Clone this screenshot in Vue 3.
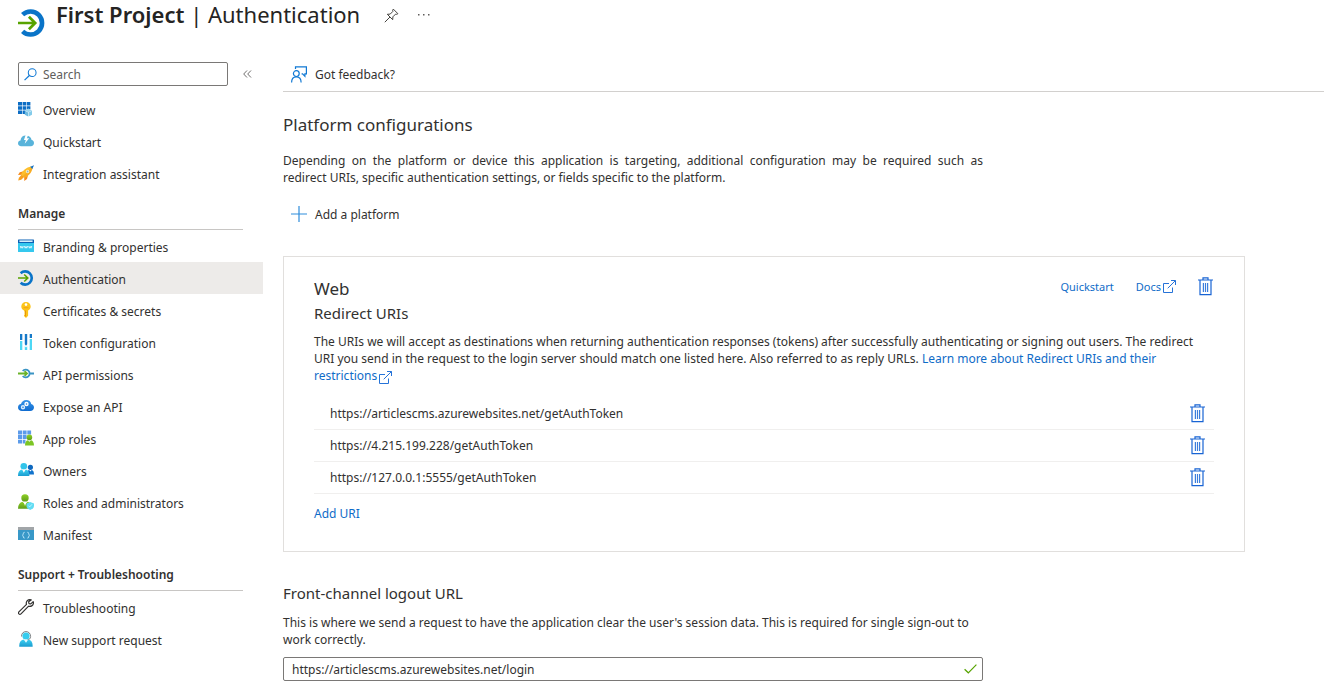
<script setup>
import { ref } from 'vue'

const search = ref('')
const logoutUrl = ref('https://articlescms.azurewebsites.net/login')

const sections = [
  {
    title: '',
    items: [
      { label: 'Overview', icon: 'overview' },
      { label: 'Quickstart', icon: 'quickstart' },
      { label: 'Integration assistant', icon: 'rocket' }
    ]
  },
  {
    title: 'Manage',
    items: [
      { label: 'Branding & properties', icon: 'branding' },
      { label: 'Authentication', icon: 'auth', active: true },
      { label: 'Certificates & secrets', icon: 'key' },
      { label: 'Token configuration', icon: 'token' },
      { label: 'API permissions', icon: 'permissions' },
      { label: 'Expose an API', icon: 'expose' },
      { label: 'App roles', icon: 'approles' },
      { label: 'Owners', icon: 'owners' },
      { label: 'Roles and administrators', icon: 'admins' },
      { label: 'Manifest', icon: 'manifest' }
    ]
  },
  {
    title: 'Support + Troubleshooting',
    items: [
      { label: 'Troubleshooting', icon: 'wrench' },
      { label: 'New support request', icon: 'support' }
    ]
  }
]

const redirectUris = [
  'https://articlescms.azurewebsites.net/getAuthToken',
  'https://4.215.199.228/getAuthToken',
  'https://127.0.0.1:5555/getAuthToken'
]
</script>

<template>
  <div class="page">
    <svg class="sprite" width="0" height="0" aria-hidden="true">
      <defs>
        <linearGradient id="g-cyan" x1="0" y1="0" x2="0" y2="1">
          <stop offset="0" stop-color="#3cd0f2" /><stop offset="1" stop-color="#1b9ccf" />
        </linearGradient>
        <linearGradient id="g-blue" x1="0" y1="0" x2="0" y2="1">
          <stop offset="0" stop-color="#3a96e8" /><stop offset="1" stop-color="#0f6cd0" />
        </linearGradient>
        <linearGradient id="g-green" x1="0" y1="0" x2="0" y2="1">
          <stop offset="0" stop-color="#8fd127" /><stop offset="1" stop-color="#5f9d18" />
        </linearGradient>
      </defs>
      <symbol id="i-overview" viewBox="0 0 16 16">
        <path fill="#0c6dc4" d="M0 1h4v3.600H0zM4.600 1h3.600v3.600H4.600zM8.800 1h3.600v3.600H8.800zM0 5.200h4v3.600H0zM4.600 5.200h3.600v3.600H4.600zM8.800 5.200h3.600v3H8.800zM0 9.400h4V13H0zM4.600 9.400h2.800V13H4.600z" />
        <path fill="#9bd4ee" d="M10.400 7.600 14 9.400 10.400 11.200 6.800 9.400z" />
        <path fill="#6cb9df" d="M6.800 9.800l3.400 1.700v4L6.800 13.700z" />
        <path fill="#83cbea" d="M14 9.800l-3.400 1.700v4l3.400-1.800z" />
      </symbol>
      <symbol id="i-quickstart" viewBox="0 0 16 16">
        <path fill="#58b3da" d="M3.200 13.200C1.200 13.200 0 12 0 10.300S1.100 7.700 2.500 7.500C2.700 4.600 4.800 2.600 7.800 2.600c3 0 5.400 1.600 5.800 4.500C15 7.300 16 8.400 16 10c0 1.900-1.300 3.200-3.200 3.200z" />
        <path fill="#fff" d="M7.800 1.800h2.400L8.900 5.300h2.300L6.700 10.800l1.100-3.900H5.900z" />
      </symbol>
      <symbol id="i-rocket" viewBox="0 0 16 16">
        <path fill="#f58b1f" d="M6 6.200 1.700 7.200 0 10l3.600-.2zM10 10.300 9 14l-2.700 2-.1-3.700z" />
        <path fill="#f7a021" d="M3.800 9.600.9 12.800.2 15.600l3-.9 3.200-2.900z" />
        <path fill="#fdbf2d" d="M3.100 9.300C4.700 5.500 8.300 2.600 13 1.600l1.500 1.500C13.600 7.600 10.500 11.200 6.600 12.800z" />
        <path fill="#f39a1c" d="M4.900 11.100 13.800 2.400l.7.700c-.9 4.500-4 8.100-7.900 9.700z" opacity=".5" />
        <circle cx="9.600" cy="6.500" r="1.700" fill="#fff2cd" /><circle cx="9.600" cy="6.500" r=".9" fill="#8fb6c8" />
        <path fill="#1470c4" d="M12.200 1.700 16 .2l-1.700 3.900z" />
      </symbol>
      <symbol id="i-branding" viewBox="0 0 16 16">
        <path fill="#0d62b5" d="M.6 1.500h14.800q.6 0 .6.600V5H0V2.100q0-.6.600-.6z" />
        <path fill="#d7eefb" d="M1.400 2.400h13.200V4H1.400z" />
        <path fill="#35c8ee" d="M0 5h16v8.400q0 .6-.6.600H.6Q0 14 0 13.400z" />
        <path fill="none" stroke="#e3f9ff" stroke-width=".9" d="M2.300 8l.7 2.200.8-1.800.8 1.800.7-2.200M6.400 8l.8 2.200.8-1.800.8 1.800.8-2.200M10.700 8l.7 2.200.8-1.800.8 1.800.7-2.200" />
      </symbol>
      <symbol id="i-auth" viewBox="0 0 28 28">
        <path fill="none" stroke="#0a74c8" stroke-width="4.600" d="M4.600 5.700A11.500 11.500 0 1 1 4.600 22.300" />
        <path fill="none" stroke="#57a300" stroke-width="2.700" d="M0 14h17M10.900 7.800 17.200 14l-6.300 6.200" />
      </symbol>
      <symbol id="i-key" viewBox="0 0 16 16">
        <path fill="#fcc419" d="M8 0c2.700 0 4.700 1.900 4.700 4.500 0 1.900-1 3.300-2.600 4v5.200L8 16l-2-2v-1l1-.9-1-1 1-1-1-.9v-.7c-1.600-.7-2.700-2.100-2.700-4C3.300 1.900 5.300 0 8 0z" />
        <path fill="#e7960d" d="M7 8.600h1v6H7z" /><circle cx="8" cy="2.600" r="1.300" fill="#fff" />
        <path fill="#f39d12" d="M5.500 5.300h5v.9h-5z" />
      </symbol>
      <symbol id="i-token" viewBox="0 0 16 16">
        <path fill="#1679c8" d="M2 0h2.300v6H2zM11.700 0H14v4h-2.300zM6.800 0h2.400v10.300L8 11.700l-1.200-1.400z" />
        <path fill="#4dd8f5" d="M2 7h2.300v9H2zM11.700 5H14v11h-2.300zM6.800 12.300 8 13.500l1.200-1.200V16H6.800z" />
      </symbol>
      <symbol id="i-permissions" viewBox="0 0 16 16">
        <path fill="none" stroke="#3a94c4" stroke-width="1.800" d="M4.700 5A3.900 3.900 0 1 1 4.700 10M11.800 7.500H16" />
        <path fill="none" stroke="#6bb32b" stroke-width="1.800" d="M0 7.500h8.800M6.600 5.100 9 7.500 6.600 9.900" />
      </symbol>
      <symbol id="i-expose" viewBox="0 0 16 16">
        <path fill="url(#g-blue)" d="M4 13c-2.300 0-4-1.500-4-3.500s1.300-3.200 3-3.400C3.500 3.500 5.600 1.900 8.200 1.900c2.700 0 4.600 1.600 5 4C14.900 6.200 16 7.500 16 9.300c0 2.200-1.500 3.700-3.800 3.700z" />
        <circle cx="8.500" cy="6" r="1.500" fill="none" stroke="#fff" stroke-width="1.400" />
        <circle cx="5" cy="9.300" r="1.500" fill="none" stroke="#d8ecfc" stroke-width="1.400" />
      </symbol>
      <symbol id="i-approles" viewBox="0 0 16 16">
        <path fill="#5c9bea" d="M0 .5h4v3.900H0zM4.700.5h3.900v3.900H4.700zM9.300.5h3.800v3.900H9.300zM0 5.100h4V9H0zM4.700 5.100h3.900V9H4.700zM0 9.700h4v3.900H0zM4.700 9.700h2.800v3.900H4.700z" />
        <circle cx="11.400" cy="7.400" r="2.800" fill="url(#g-green)" />
        <path fill="#7cc524" d="M7 15.500c0-3 1-5 2.700-5.300l1.700 1.500 1.700-1.500c1.800.3 2.900 2.300 2.900 5.300z" />
      </symbol>
      <symbol id="i-owners" viewBox="0 0 16 16">
        <circle cx="12.400" cy="5.300" r="2.600" fill="#0e68bf" /><path fill="#1173cc" d="M8.800 12.600c0-3 1.200-4.300 2.400-4.500l1.200 1.300 1.200-1.300c1.600.2 2.400 1.700 2.400 4.500z" />
        <circle cx="5.800" cy="4.300" r="3.300" fill="#32c4ea" />
        <path fill="url(#g-cyan)" d="M0 14c0-4 1.400-6 3.700-6.500l2.100 2.300 2.200-2.300c2.200.5 3.400 2.500 3.400 6.500z" /><path fill="#fff" d="M4.700 7.700h2.400L5.900 11z" />
      </symbol>
      <symbol id="i-admins" viewBox="0 0 16 16">
        <circle cx="7" cy="3.900" r="3.700" fill="url(#g-green)" />
        <path fill="url(#g-green)" d="M0 14.800C0 10.600 1.800 8.300 4.500 7.700L7 10.300l2.600-2.600c2.200.5 3.400 2 3.400 7.100z" />
        <path fill="#fff" d="M5.700 8h2.700L7 12z" />
        <path fill="#62dcf3" d="m12.200 8 3.800 1.400v2.500c0 1.800-1.500 3.200-3.800 4.100-2.300-.9-3.700-2.300-3.700-4.100V9.400z" />
        <path fill="none" stroke="#d5faff" stroke-width=".8" d="m10.400 11.600 1.300 1.300 2.300-2.600" />
      </symbol>
      <symbol id="i-manifest" viewBox="0 0 16 16">
        <path fill="#3898c8" d="M0 1h16v13H0z" /><path fill="#a1a5a8" d="M0 1h16v3H0z" />
        <path fill="none" stroke="#cdefff" stroke-width=".9" d="M6.600 6.300q-1.300 0-1.300 1.300 0 1.300-.8 1.600.8.300.8 1.600 0 1.300 1.300 1.300M9.400 6.300q1.300 0 1.300 1.300 0 1.300.8 1.600-.8.300-.8 1.600 0 1.300-1.300 1.300" />
      </symbol>
      <symbol id="i-wrench" viewBox="0 0 16 16">
        <path fill="none" stroke="#323130" stroke-width="1.200" stroke-linejoin="round" d="M13.200.9C11.300.2 9.200 1 8.500 2.900c-.3.900-.3 1.700 0 2.500L.9 12.900c-.6.700-.5 1.500 0 2 .6.500 1.500.5 2.100-.1l7.600-7.600c2.200.8 4.500-.7 4.800-2.900.1-.6 0-1.200-.2-1.700l-2.400 2.300-1.800-.3-.4-1.900z" />
      </symbol>
      <symbol id="i-support" viewBox="0 0 16 16">
        <path fill="none" stroke="#7b7f83" stroke-width="1" d="M3.500 5.500C3.500 2.300 5.400.6 8 .6s4.600 1.800 4.600 4.900c0 2-1.200 3.200-3.100 3.200" />
        <circle cx="8" cy="5" r="3.600" fill="#36ccee" />
        <path fill="url(#g-cyan)" d="M1.200 15.200c0-4.100 1.600-6.300 4.300-6.800L8 11l2.500-2.600c2.700.5 4.200 2.700 4.200 6.800q0 .6-.6.600H1.800q-.6 0-.6-.6z" />
        <path fill="#e6fbff" d="M6.700 8.800h2.600L8 12z" />
      </symbol>
      <symbol id="i-trash" viewBox="0 0 15 19">
        <path fill="none" stroke="#1864d4" stroke-width="1.200" d="M0 3h15M5 3V.8h5V3M2 3.500v14.200h11V3.500" />
        <path fill="none" stroke="#3c7edc" stroke-width="1.200" d="M5.400 6v9M7.500 6v9M9.600 6v9" />
      </symbol>
      <symbol id="i-external" viewBox="0 0 13 13">
        <path fill="none" stroke="#2673d8" stroke-width="1" d="M6 3.500H.5v9h9V7.500M8 .5h4.500V5M12.400.6 4.700 8.300" />
      </symbol>
    </svg>

    <header class="head">
      <svg class="head-icon"><use href="#i-auth" /></svg>
      <h1><b>First Project</b> | Authentication</h1>
      <button class="plain pin" aria-label="Pin">
        <svg width="15" height="15" viewBox="0 0 15 15"><path fill="none" stroke="#45433f" d="M9.300 1.100 13.900 5.700 12.800 6.300 11.600 6.100 8.900 8.800 8.700 11.700 3.300 6.300 6.200 6.100 8.900 3.400 8.700 2.200zM6 9 .8 14.200" /></svg>
      </button>
      <button class="plain more" aria-label="More options">
        <svg width="12" height="4" viewBox="0 0 12 4"><path fill="#605e5c" d="M0 1h1.500v1.500H0zM5 1h1.500v1.500H5zM10 1h1.500v1.500H10z" /></svg>
      </button>
    </header>

    <div class="body">
      <aside class="side">
        <div class="search-row">
          <label class="search">
            <svg width="13" height="13" viewBox="0 0 14 14"><circle cx="8.800" cy="5" r="4.200" fill="none" stroke="#0f78d4" stroke-width="1.100" /><path stroke="#0f78d4" stroke-width="1.300" d="M5.800 8.100.6 13.100" /></svg>
            <input v-model="search" type="text" placeholder="Search" aria-label="Search">
          </label>
          <button class="plain" aria-label="Collapse menu">
            <svg width="9" height="8" viewBox="0 0 9 8"><path fill="none" stroke="#605e5c" stroke-width=".9" d="M4 .5.700 4 4 7.500M8 .5 4.700 4 8 7.500" /></svg>
          </button>
        </div>
        <nav>
          <template v-for="section in sections" :key="section.title">
            <h2 v-if="section.title" class="group">{{ section.title }}</h2>
            <a v-for="item in section.items" :key="item.label" href="#" class="item" :class="{ active: item.active }">
              <svg class="item-icon"><use :href="'#i-' + item.icon" /></svg>
              <span>{{ item.label }}</span>
            </a>
          </template>
        </nav>
      </aside>

      <main class="main">
        <div class="toolbar">
          <button class="command">
            <svg width="16" height="17" viewBox="0 0 16 17"><path fill="none" stroke="#0f78d4" stroke-width="1.200" d="M4.500 3V.9h10.900v7h-1.500v2.400l-2.300-2.400h-1" /><circle cx="5.300" cy="7.600" r="2.900" fill="none" stroke="#0f78d4" stroke-width="1.200" /><path fill="none" stroke="#0f78d4" stroke-width="1.200" d="M.6 16.400c0-3.400 1.800-5.500 4.700-5.500s4.800 2.100 4.800 5.500" /></svg>
            <span>Got feedback?</span>
          </button>
        </div>

        <section class="platforms">
          <h2>Platform configurations</h2>
          <p class="justified">Depending on the platform or device this application is targeting, additional configuration may be required such as redirect&nbsp;URIs, specific authentication settings, or fields specific to the platform.</p>
          <button class="command">
            <svg width="16" height="16" viewBox="0 0 16 16"><path fill="none" stroke="#2f8ddb" stroke-width="1.200" d="M8 0v16M0 8h16" /></svg>
            <span>Add a platform</span>
          </button>
        </section>

        <section class="card">
          <div class="card-head">
            <h2>Web</h2>
            <div class="card-links">
              <a href="#">Quickstart</a>
              <a href="#" class="docs">Docs<svg class="ext"><use href="#i-external" /></svg></a>
              <button class="plain trash" aria-label="Delete platform"><svg><use href="#i-trash" /></svg></button>
            </div>
          </div>
          <h3>Redirect URIs</h3>
          <p>The URIs we will accept as destinations when returning authentication responses (tokens) after successfully authenticating or signing out users. The redirect URI you send in the request to the login server should match one listed here. Also referred to as reply URLs. <a href="#">Learn more about Redirect URIs and their restrictions<svg class="ext"><use href="#i-external" /></svg></a></p>
          <ul class="uris">
            <li v-for="uri in redirectUris" :key="uri">
              <span>{{ uri }}</span>
              <button class="plain trash" :aria-label="'Delete ' + uri"><svg><use href="#i-trash" /></svg></button>
            </li>
          </ul>
          <a href="#">Add URI</a>
        </section>

        <section class="logout">
          <h2><label for="logout-url">Front-channel logout URL</label></h2>
          <p>This is where we send a request to have the application clear the user's session data. This is required for single sign-out to work correctly.</p>
          <div class="field">
            <input id="logout-url" v-model="logoutUrl" type="text">
            <svg width="13" height="10" viewBox="0 0 13 10"><path fill="none" stroke="#57a300" stroke-width="1.200" d="M.6 5.200 4.300 8.800 12.400.7" /></svg>
          </div>
        </section>
      </main>
    </div>
  </div>
</template>

<style>
body {
  margin: 0;
  background: #fff;
}
</style>

<style scoped>
.page {
  font-family: "Noto Sans", "Open Sans", sans-serif;
  font-size: 12px;
  line-height: 17px;
  color: #323130;
}
.sprite {
  position: absolute;
}
h1, h2, h3, p, ul {
  margin: 0;
  padding: 0;
  font-weight: 400;
}
a {
  color: #0f6cc8;
  text-decoration: none;
}
button, input {
  font: inherit;
  color: inherit;
}
button {
  border: 0;
  padding: 0;
  background: none;
}
svg {
  display: block;
  flex: none;
}
h2 {
  font-size: 17px;
  line-height: 24px;
}
.plain {
  display: flex;
}
.head {
  display: flex;
  align-items: center;
  height: 30px;
  padding-left: 18px;
}
.head-icon {
  width: 28px;
  height: 28px;
  margin-top: 16px;
}
h1 {
  margin: 0 0 2px 10px;
  font-size: 22px;
  line-height: 30px;
  color: #252423;
  white-space: nowrap;
}
h1 b {
  font-weight: 600;
}
.pin {
  margin-left: 24px;
}
.more {
  margin-left: 19px;
}
.body {
  display: flex;
  padding-top: 32px;
}
.side {
  flex: none;
  width: 263px;
}
.search-row {
  display: flex;
  align-items: center;
  gap: 15px;
  padding: 0 0 8px 18px;
}
.search {
  display: flex;
  align-items: center;
  gap: 6px;
  box-sizing: border-box;
  width: 210px;
  height: 24px;
  padding-left: 5px;
  border: 1px solid #7a7876;
  border-radius: 2px;
}
.search input {
  flex: 1;
  min-width: 0;
  padding: 0;
  border: 0;
  outline: 0;
  background: none;
}
.search input::placeholder {
  color: #605e5c;
  opacity: 1;
}
nav {
  margin-top: -1px;
}
.item {
  display: flex;
  align-items: center;
  gap: 9px;
  height: 32px;
  padding-left: 18px;
  color: #323130;
}
.item span {
  padding-top: 3px;
}
.item.active {
  background: #edebe9;
}
.item-icon {
  width: 16px;
  height: 16px;
}
.group {
  box-sizing: border-box;
  height: 41px;
  margin: 0 20px 0 18px;
  padding-top: 16px;
  border-bottom: 1px solid #c8c6c4;
  font-size: 12px;
  line-height: 17px;
  font-weight: 600;
}
.main {
  flex: 1;
  min-width: 0;
  padding-left: 20px;
}
.toolbar {
  height: 29px;
  border-bottom: 1px solid #d2d0ce;
}
.command {
  display: flex;
  align-items: center;
  gap: 8px;
  height: 24px;
  padding-left: 8px;
}
.platforms {
  padding-top: 21px;
}
.platforms p {
  max-width: 700px;
  margin: 15px 0 16px;
}
.justified {
  text-align: justify;
}
.card {
  max-width: 900px;
  margin: 30px 79px 0 0;
  padding: 20px 30px 29px;
  border: 1px solid #e1dfdd;
}
.card-head {
  display: flex;
  justify-content: space-between;
  height: 24px;
}
.card-links {
  display: flex;
  align-items: center;
  height: 18px;
  gap: 22px;
  padding-right: 1px;
  font-size: 11px;
}
.docs {
  display: flex;
  align-items: center;
}
.ext {
  display: inline-block;
  width: 13px;
  height: 13px;
  margin-left: 2px;
  vertical-align: -4px;
}
.trash svg {
  width: 15px;
  height: 19px;
}
h3 {
  margin-bottom: 8px;
  font-size: 15px;
  line-height: 24px;
}
.uris {
  margin: 14px 0 11px;
  list-style: none;
}
.uris li {
  display: flex;
  align-items: center;
  justify-content: space-between;
  box-sizing: border-box;
  height: 32px;
  padding: 0 9px 0 16px;
  border-bottom: 1px solid #f0efee;
}
.logout {
  max-width: 700px;
  padding-top: 29px;
}
.logout h2 {
  font-size: 15px;
}
.logout p {
  margin: 9px 0;
}
.field {
  display: flex;
  align-items: center;
  box-sizing: border-box;
  height: 24px;
  padding: 0 5px 0 8px;
  border: 1px solid #7a7876;
  border-radius: 2px;
}
.field input {
  flex: 1;
  min-width: 0;
  padding: 0;
  border: 0;
  outline: 0;
  background: none;
}
</style>
